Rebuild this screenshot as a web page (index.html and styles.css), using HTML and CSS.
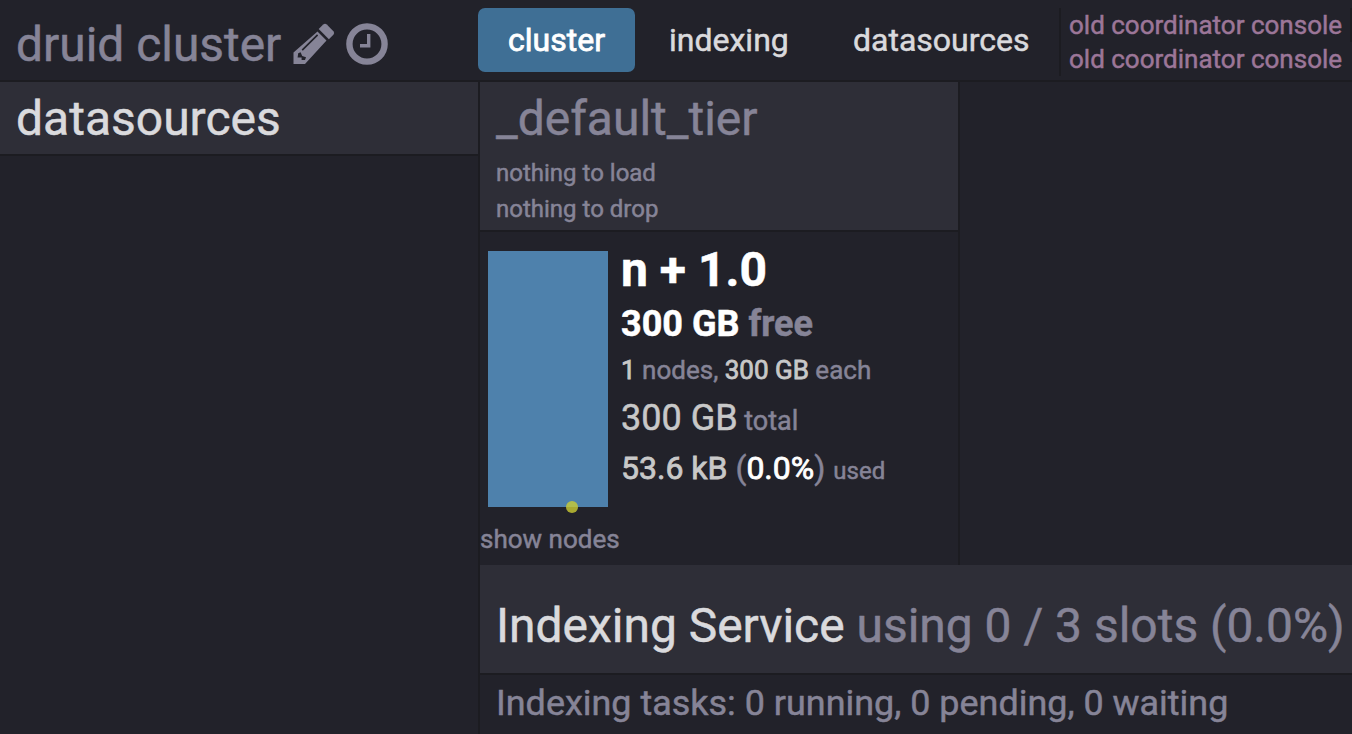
FILE: index.html
```html
<!DOCTYPE html>
<html lang="en">
<head>
<meta charset="utf-8">
<title>druid cluster</title>
<link rel="stylesheet" href="styles.css">
</head>
<body>
<header class="topbar">
  <div class="brand">
    <span class="brand-name">druid cluster</span>
    <svg class="icon pencil" viewBox="0 0 42 42">
      <path fill-rule="evenodd" d="M24.5 8.5L33.5 17.5L12 41H0.5V29.5ZM24 11.2L8.6 26.6L9.8 27.8L25.2 12.4ZM5.2 30.2L7.6 29.2L9.2 33L13 34.2L12 37H8.6V34.6H4.6Z"/>
      <path d="M25.7 6.1L30.2 1.6Q32 0 33.8 1.6L40.4 8.2Q42 10 40.4 11.8L35.9 16.3Z"/>
    </svg>
    <svg class="icon clock" viewBox="0 0 42 42">
      <circle cx="21" cy="21" r="17.6"/>
      <path d="M22.7 11V22.8H14"/>
    </svg>
  </div>
  <nav class="tabs">
    <a class="tab active">cluster</a>
    <a class="tab indexing">indexing</a>
    <a class="tab sources">datasources</a>
  </nav>
  <div class="consoles">
    <a>old coordinator console</a>
    <a>old coordinator console</a>
  </div>
  <div class="edge"></div>
</header>
<main class="columns">
  <aside class="sidebar">
    <h2 class="title light">datasources</h2>
  </aside>
  <div class="content">
    <section class="tier">
      <div class="tier-head">
        <h2 class="title">_default_tier</h2>
        <p class="queue">nothing to load</p>
        <p class="queue">nothing to drop</p>
      </div>
      <div class="tier-body">
        <div class="capacity"><i class="dot"></i></div>
        <div class="stats">
          <div class="redundancy">n + 1.0</div>
          <div class="free"><b>300 GB</b> free</div>
          <div class="nodes"><b>1</b> nodes, <b>300 GB</b> each</div>
          <div class="total"><b>300 GB</b><small> total</small></div>
          <div class="used"><b>53.6 kB</b> (<em>0.0%</em>) <small>used</small></div>
        </div>
      </div>
      <a class="show-nodes">show nodes</a>
    </section>
    <section class="service">
      <h2 class="service-title"><b>Indexing Service</b> using 0 / 3 slots (0.0%)</h2>
      <p class="tasks">Indexing tasks: 0 running, 0 pending, 0 waiting</p>
    </section>
  </div>
</main>
</body>
</html>
```
FILE: styles.css
```css
* { box-sizing: border-box; }
body {
  margin: 0;
  height: 734px;
  overflow: hidden;
  display: flex;
  flex-direction: column;
  background: #22222a;
  color: #868497;
  font-family: Roboto, "Liberation Sans", sans-serif;
  white-space: nowrap;
  -webkit-text-stroke: .5px;
}
h2, p { margin: 0; font-weight: 400; }
.topbar {
  display: flex;
  height: 82px;
  flex: none;
  border-bottom: 2px solid #1c1c21;
}
.brand { display: flex; width: 478px; padding-left: 16px; }
.brand-name { width: 277px; font-size: 47.9px; line-height: 91px; }
.icon { width: 42px; height: 42px; margin-top: 23px; fill: #868497; flex: none; }
.clock { margin-left: 11px; fill: none; stroke: #868497; }
.clock circle { stroke-width: 6.4; }
.clock path { stroke-width: 3.4; }
.tabs { display: flex; width: 581px; padding-top: 8px; }
.tab {
  height: 64px;
  padding-left: 30px;
  border-radius: 7px;
  font-size: 32px;
  line-height: 64px;
  color: #dadadd;
}
.active { width: 157px; background: #3f6f95; color: #fff; -webkit-text-stroke: .8px; }
.indexing { width: 184px; padding-left: 34px; }
.sources { padding-left: 34px; }
.consoles {
  width: 291px;
  height: 68px;
  margin-top: 8px;
  padding-left: 8px;
  border-left: 2px solid #1c1c21;
}
.consoles a { display: block; font-size: 26px; line-height: 34px; color: #9c7698; }
.edge { width: 2px; height: 34px; margin-top: 8px; background: #1c1c21; }
.columns { display: flex; flex: 1; }
.sidebar { width: 480px; border-right: 2px solid #1c1c21; }
.sidebar .title { border-bottom: 2px solid #1c1c21; background: #2e2e37; height: 74px; }
.title { padding-left: 16px; font-size: 48px; line-height: 73px; height: 73px; }
.light { color: #dadadd; }
.content { width: 872px; display: flex; flex-direction: column; }
.tier { width: 480px; height: 483px; border-right: 2px solid #1c1c21; }
.tier-head { height: 150px; background: #2e2e37; border-bottom: 2px solid #1c1c21; }
.queue { padding-left: 16px; font-size: 24px; line-height: 36px; }
.tier-body { display: flex; height: 288px; padding-left: 8px; }
.capacity { position: relative; width: 120px; height: 256px; margin-top: 19px; background: #4e81ac; }
.dot {
  position: absolute;
  left: 78px;
  bottom: -6px;
  width: 12px;
  height: 12px;
  border-radius: 50%;
  background: rgba(204, 204, 51, .8);
}
.stats { padding: 10px 0 0 13px; }
.stats b { font-weight: 400; color: #c8c8c8; }
.stats small { line-height: 1; }
.redundancy { font-size: 48px; font-weight: 700; line-height: 55px; color: #fff; }
.free { font-size: 36px; font-weight: 700; line-height: 55px; }
.stats .free b { font-weight: 700; color: #fff; }
.nodes { font-size: 26px; line-height: 36px; }
.nodes b { -webkit-text-stroke: .8px; }
.total { font-size: 36px; line-height: 61px; }
.total small { font-size: 27px; }
.used { font-size: 32px; line-height: 38px; }
.used b, .used em { -webkit-text-stroke: .8px; }
.used em { font-style: normal; color: #fff; }
.used small { font-size: 24px; }
.show-nodes { display: block; font-size: 26px; line-height: 39px; }
.service-title {
  height: 110px;
  padding-left: 16px;
  border-bottom: 2px solid #1c1c21;
  background: #2e2e37;
  font-size: 47.95px;
  line-height: 123px;
}
.service-title b { font-weight: 400; color: #dadadd; }
.tasks { padding-left: 16px; font-size: 35.95px; line-height: 56px; }
```
